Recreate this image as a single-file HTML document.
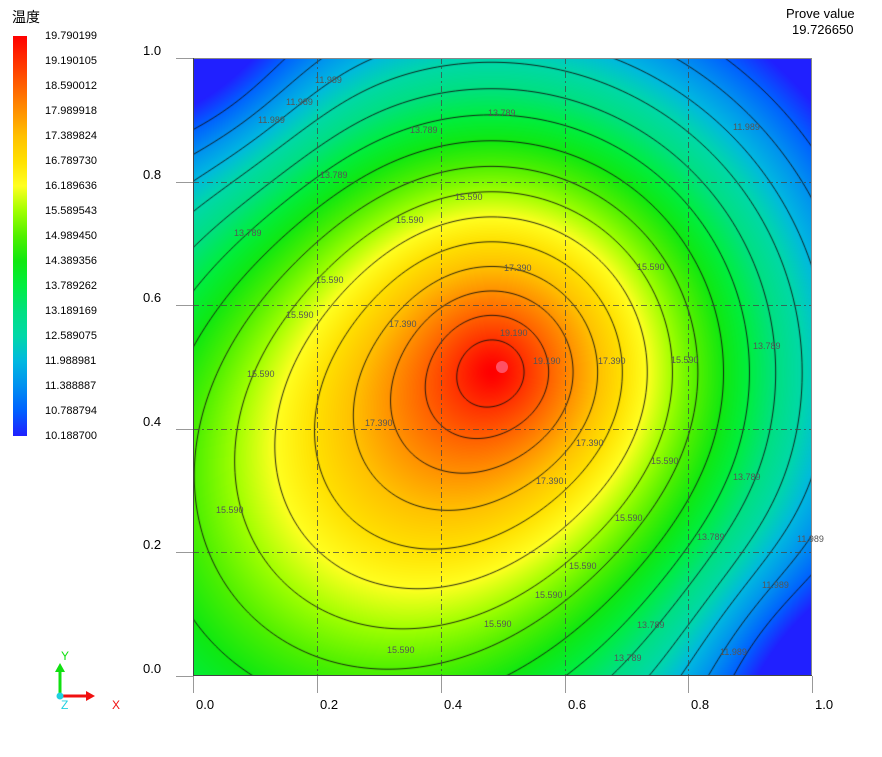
<!DOCTYPE html>
<html><head><meta charset="utf-8"><style>
body{margin:0;width:882px;height:757px;background:#fff;position:relative;overflow:hidden;font-family:"Liberation Sans","Noto Sans CJK JP",sans-serif;}
.a{position:absolute;white-space:nowrap;}
.lg{position:absolute;left:45px;font-size:11px;color:#000;line-height:12px;}
.ax{position:absolute;font-size:13px;color:#000;line-height:14px;}
.cl{position:absolute;font-size:9px;color:#555;line-height:10px;}
#plot{position:absolute;left:193px;top:58px;width:619px;height:618px;
background:radial-gradient(ellipse 60% 55% at 45% 52%,#ff3000 0%,#ffa000 15%,#ffff20 35%,#40f000 60%,#00d8b0 80%,#0070ff 100%);}
</style></head><body>
<div class="a" style="left:12px;top:7px;font-size:14px;">温度</div>
<div class="a" style="left:13px;top:36px;width:14px;height:400px;background:linear-gradient(to bottom,#ff0000 0%,#ff3000 6.25%,#ff6000 12.5%,#ff9000 18.75%,#ffc000 25%,#ffe000 31.25%,#ffff20 37.5%,#a0ff00 43.75%,#50f000 50%,#10e810 56.25%,#00ee40 62.5%,#00e080 68.75%,#00d8a8 75%,#00b8e0 81.25%,#0090f0 87.5%,#0060ff 93.75%,#2020ff 100%);"></div>
<div class="lg" style="top:30px">19.790199</div>
<div class="lg" style="top:55px">19.190105</div>
<div class="lg" style="top:80px">18.590012</div>
<div class="lg" style="top:105px">17.989918</div>
<div class="lg" style="top:130px">17.389824</div>
<div class="lg" style="top:155px">16.789730</div>
<div class="lg" style="top:180px">16.189636</div>
<div class="lg" style="top:205px">15.589543</div>
<div class="lg" style="top:230px">14.989450</div>
<div class="lg" style="top:255px">14.389356</div>
<div class="lg" style="top:280px">13.789262</div>
<div class="lg" style="top:305px">13.189169</div>
<div class="lg" style="top:330px">12.589075</div>
<div class="lg" style="top:355px">11.988981</div>
<div class="lg" style="top:380px">11.388887</div>
<div class="lg" style="top:405px">10.788794</div>
<div class="lg" style="top:430px">10.188700</div>

<div class="a" style="left:786px;top:6px;font-size:13px;">Prove value</div>
<div class="a" style="left:792px;top:22px;font-size:13px;">19.726650</div>

<div id="plot"><canvas id="cv" width="619" height="618" style="display:block"></canvas></div>

<svg class="a" style="left:0;top:0" width="882" height="757">
<g stroke="#444" stroke-width="1" stroke-dasharray="6,3,2,3" opacity="0.75" fill="none">
<line x1="317.5" y1="58" x2="317.5" y2="676"/><line x1="441.5" y1="58" x2="441.5" y2="676"/>
<line x1="565.5" y1="58" x2="565.5" y2="676"/><line x1="688.5" y1="58" x2="688.5" y2="676"/>
<line x1="193" y1="182.5" x2="812" y2="182.5"/><line x1="193" y1="305.5" x2="812" y2="305.5"/>
<line x1="193" y1="429.5" x2="812" y2="429.5"/><line x1="193" y1="552.5" x2="812" y2="552.5"/>
</g>
<rect x="193.5" y="58.5" width="618" height="617" fill="none" stroke="#888"/>
<line x1="193.5" y1="58" x2="193.5" y2="676" stroke="#444"/>
<line x1="193" y1="675.5" x2="812" y2="675.5" stroke="#444"/>
<g stroke="#999" stroke-width="1">
<line x1="176" y1="58.5" x2="193" y2="58.5"/><line x1="176" y1="182.5" x2="193" y2="182.5"/>
<line x1="176" y1="305.5" x2="193" y2="305.5"/><line x1="176" y1="429.5" x2="193" y2="429.5"/>
<line x1="176" y1="552.5" x2="193" y2="552.5"/><line x1="176" y1="676.5" x2="193" y2="676.5"/>
<line x1="193.5" y1="676" x2="193.5" y2="693"/><line x1="317.5" y1="676" x2="317.5" y2="693"/>
<line x1="441.5" y1="676" x2="441.5" y2="693"/><line x1="565.5" y1="676" x2="565.5" y2="693"/>
<line x1="688.5" y1="676" x2="688.5" y2="693"/><line x1="812.5" y1="676" x2="812.5" y2="693"/>
</g>
<circle cx="502" cy="367" r="6" fill="#ff5064"/>
<line x1="60" y1="695" x2="60" y2="670" stroke="#10e010" stroke-width="3"/>
<polygon points="55,672 65,672 60,663" fill="#10e010"/>
<line x1="60" y1="696" x2="88" y2="696" stroke="#f01010" stroke-width="3"/>
<polygon points="86,691 86,701 95,696" fill="#f01010"/>
<circle cx="60" cy="696" r="3.5" fill="#20d0e0"/>
</svg>
<div class="a" style="left:61px;top:649px;font-size:12px;color:#10e010;">Y</div>
<div class="a" style="left:61px;top:698px;font-size:12px;color:#20d0e0;">Z</div>
<div class="a" style="left:112px;top:698px;font-size:12px;color:#f01010;">X</div>

<div class="ax" style="left:143px;top:44px">1.0</div>
<div class="ax" style="left:143px;top:168px">0.8</div>
<div class="ax" style="left:143px;top:291px">0.6</div>
<div class="ax" style="left:143px;top:415px">0.4</div>
<div class="ax" style="left:143px;top:538px">0.2</div>
<div class="ax" style="left:143px;top:662px">0.0</div>
<div class="ax" style="left:196px;top:698px">0.0</div>
<div class="ax" style="left:320px;top:698px">0.2</div>
<div class="ax" style="left:444px;top:698px">0.4</div>
<div class="ax" style="left:568px;top:698px">0.6</div>
<div class="ax" style="left:691px;top:698px">0.8</div>
<div class="ax" style="left:815px;top:698px">1.0</div>

<div class="cl" style="left:315px;top:75px">11.989</div>
<div class="cl" style="left:286px;top:97px">11.989</div>
<div class="cl" style="left:258px;top:115px">11.989</div>
<div class="cl" style="left:410px;top:125px">13.789</div>
<div class="cl" style="left:488px;top:108px">13.789</div>
<div class="cl" style="left:320px;top:170px">13.789</div>
<div class="cl" style="left:234px;top:228px">13.789</div>
<div class="cl" style="left:733px;top:122px">11.989</div>
<div class="cl" style="left:396px;top:215px">15.590</div>
<div class="cl" style="left:455px;top:192px">15.590</div>
<div class="cl" style="left:316px;top:275px">15.590</div>
<div class="cl" style="left:286px;top:310px">15.590</div>
<div class="cl" style="left:247px;top:369px">15.590</div>
<div class="cl" style="left:216px;top:505px">15.590</div>
<div class="cl" style="left:387px;top:645px">15.590</div>
<div class="cl" style="left:484px;top:619px">15.590</div>
<div class="cl" style="left:535px;top:590px">15.590</div>
<div class="cl" style="left:569px;top:561px">15.590</div>
<div class="cl" style="left:615px;top:513px">15.590</div>
<div class="cl" style="left:651px;top:456px">15.590</div>
<div class="cl" style="left:671px;top:355px">15.590</div>
<div class="cl" style="left:637px;top:262px">15.590</div>
<div class="cl" style="left:504px;top:263px">17.390</div>
<div class="cl" style="left:389px;top:319px">17.390</div>
<div class="cl" style="left:365px;top:418px">17.390</div>
<div class="cl" style="left:598px;top:356px">17.390</div>
<div class="cl" style="left:576px;top:438px">17.390</div>
<div class="cl" style="left:536px;top:476px">17.390</div>
<div class="cl" style="left:500px;top:328px">19.190</div>
<div class="cl" style="left:533px;top:356px">19.190</div>
<div class="cl" style="left:753px;top:341px">13.789</div>
<div class="cl" style="left:733px;top:472px">13.789</div>
<div class="cl" style="left:697px;top:532px">13.789</div>
<div class="cl" style="left:637px;top:620px">13.789</div>
<div class="cl" style="left:614px;top:653px">13.789</div>
<div class="cl" style="left:797px;top:534px">11.989</div>
<div class="cl" style="left:762px;top:580px">11.989</div>
<div class="cl" style="left:720px;top:647px">11.989</div>

<script>
(function(){
var cv=document.getElementById('cv');if(!cv||!cv.getContext)return;
var ctx=cv.getContext('2d');var W=619,H=618,cx=0.483,cy=0.492;
var c225=Math.cos(5*Math.PI/4),s225=Math.sin(5*Math.PI/4);
function T(px,py){var x=px/W,y=1-py/H,dx=x-cx,dy=y-cy,r=Math.sqrt(dx*dx+dy*dy)+1e-9;
var cs=(dx*c225+dy*s225)/r;var w=Math.pow((1+cs)/2,4);
var s=1.05+0.76*w*(1-Math.exp(-r/0.22));
var rho=r/s;var rr=Math.sqrt(rho*rho+0.000225)-0.015;var t=19.79-(16.5*rr-2*rr*rr);
var d1=x*x+(1-y)*(1-y),d2=(1-x)*(1-x)+y*y;t-=1.0*(Math.exp(-d1/0.03)+Math.exp(-d2/0.03));
return t;}
var st=[[0,32,32,255],[0.0625,0,96,255],[0.125,0,144,240],[0.1875,0,184,224],[0.25,0,216,168],[0.3125,0,224,128],[0.375,0,238,64],[0.4375,16,232,16],[0.5,80,240,0],[0.5625,160,255,0],[0.625,255,255,32],[0.6875,255,224,0],[0.75,255,192,0],[0.8125,255,144,0],[0.875,255,96,0],[0.9375,255,48,0],[1,255,0,0]];
function col(t){t=(t-10.1887)/9.6015;if(t<0)t=0;if(t>1)t=1;for(var i=1;i<st.length;i++){if(t<=st[i][0]){var a=st[i-1],b=st[i],f=(t-a[0])/(b[0]-a[0]);return [a[1]+(b[1]-a[1])*f,a[2]+(b[2]-a[2])*f,a[3]+(b[3]-a[3])*f];}}return [255,0,0];}
var img=ctx.createImageData(W,H),d=img.data;
for(var j=0;j<H;j++)for(var i=0;i<W;i++){var c=col(T(i+0.5,j+0.5)),k=(j*W+i)*4;d[k]=c[0];d[k+1]=c[1];d[k+2]=c[2];d[k+3]=255;}
ctx.putImageData(img,0,0);
var S=3,nx=Math.ceil(W/S)+1,ny=Math.ceil(H/S)+1,g=[];
for(var j=0;j<ny;j++){g[j]=[];for(var i=0;i<nx;i++)g[j][i]=T(i*S,j*S);}
ctx.strokeStyle='rgba(15,15,15,0.9)';ctx.lineWidth=1;ctx.beginPath();
for(var L=1;L<16;L++){var lv=10.1887+0.6*L;
for(var j=0;j<ny-1;j++)for(var i=0;i<nx-1;i++){
var a=g[j][i],b=g[j][i+1],c2=g[j+1][i+1],e=g[j+1][i];var p=[];
var X=i*S,Y=j*S;
var ip=function(v1,v2,x1,y1,x2,y2){var f=(lv-v1)/(v2-v1);p.push([x1+(x2-x1)*f,y1+(y2-y1)*f]);};
if((a-lv)*(b-lv)<0)ip(a,b,X,Y,X+S,Y);
if((b-lv)*(c2-lv)<0)ip(b,c2,X+S,Y,X+S,Y+S);
if((c2-lv)*(e-lv)<0)ip(c2,e,X+S,Y+S,X,Y+S);
if((e-lv)*(a-lv)<0)ip(e,a,X,Y+S,X,Y);
for(var q=0;q+1<p.length;q+=2){ctx.moveTo(p[q][0],p[q][1]);ctx.lineTo(p[q+1][0],p[q+1][1]);}
}}
ctx.stroke();
})();
</script>
</body></html>
